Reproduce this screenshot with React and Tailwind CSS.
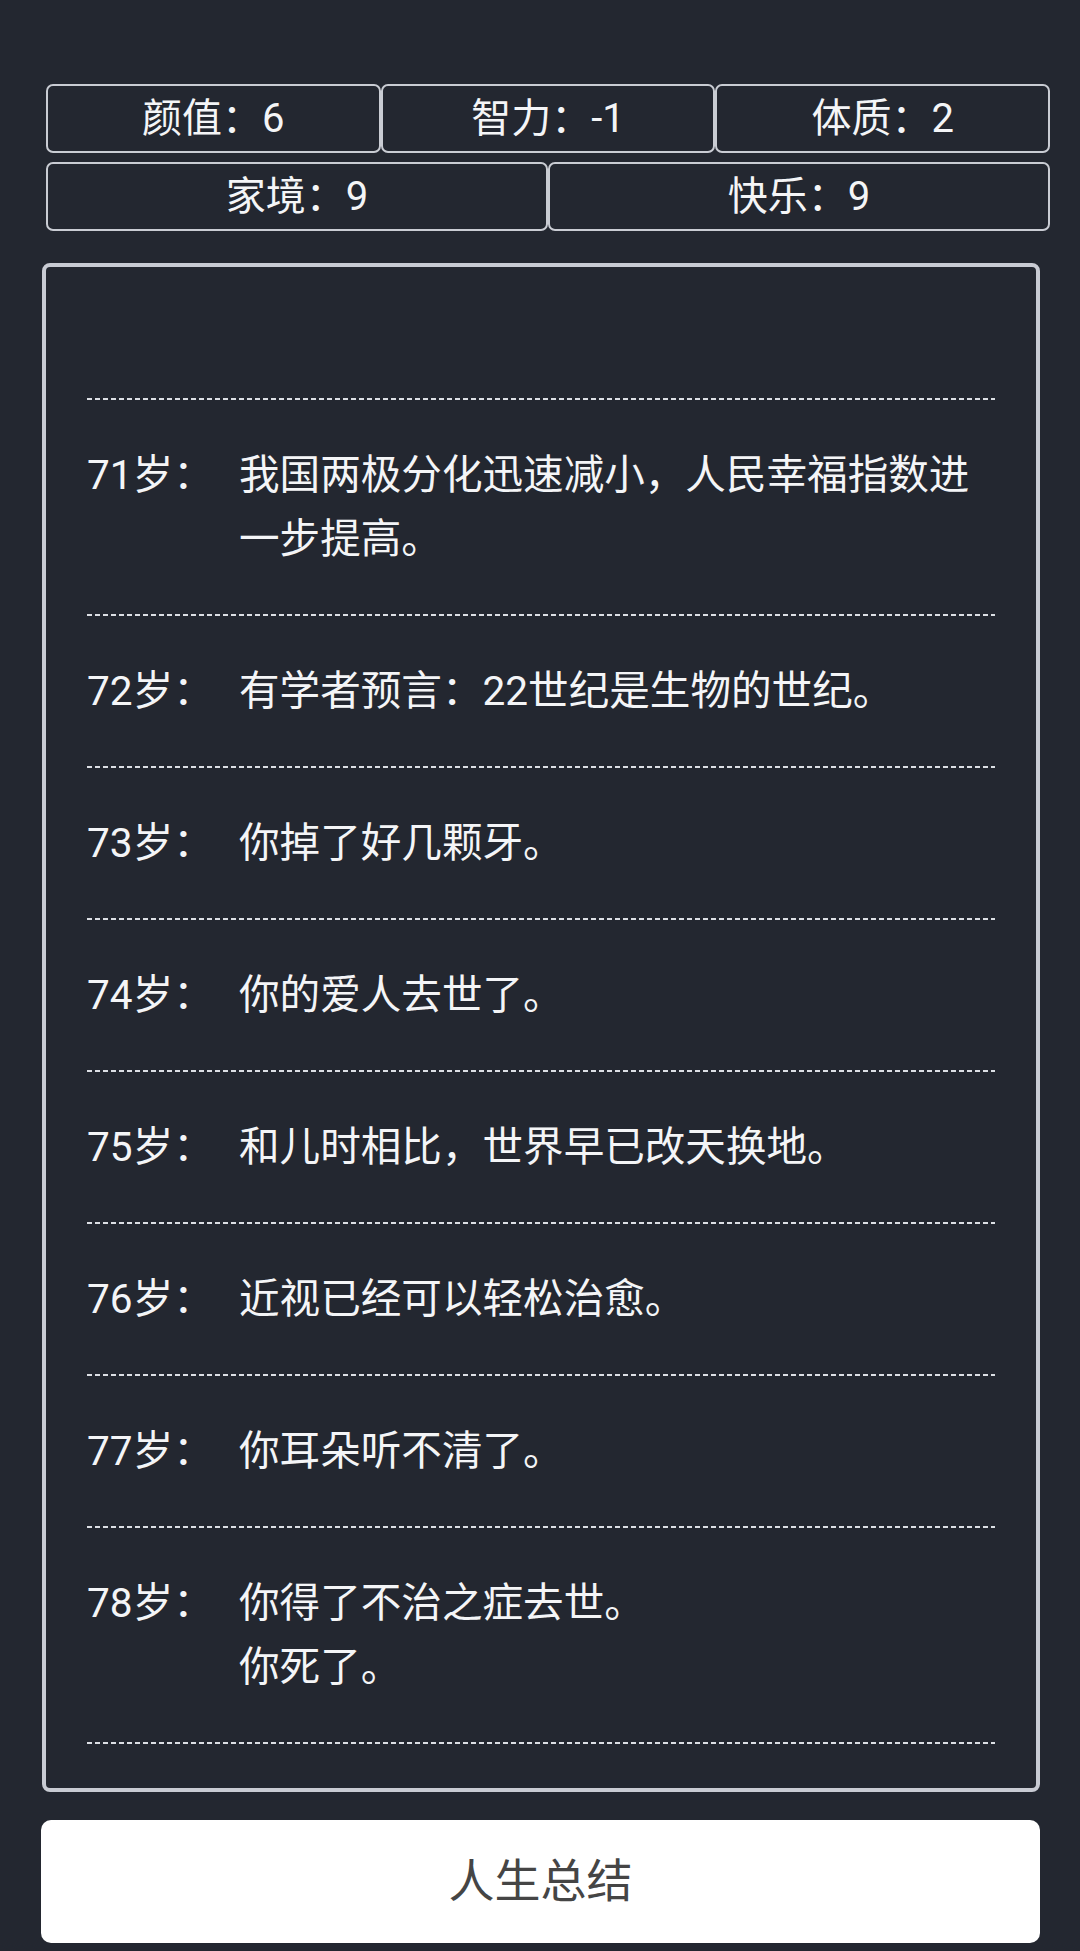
import React from 'react';

const stats = [
  [
    { label: '颜值', value: 6 },
    { label: '智力', value: -1 },
    { label: '体质', value: 2 },
  ],
  [
    { label: '家境', value: 9 },
    { label: '快乐', value: 9 },
  ],
];

const events = [
  { age: 71, lines: ['我国两极分化迅速减小，人民幸福指数进一步提高。'] },
  { age: 72, lines: ['有学者预言：22世纪是生物的世纪。'] },
  { age: 73, lines: ['你掉了好几颗牙。'] },
  { age: 74, lines: ['你的爱人去世了。'] },
  { age: 75, lines: ['和儿时相比，世界早已改天换地。'] },
  { age: 76, lines: ['近视已经可以轻松治愈。'] },
  { age: 77, lines: ['你耳朵听不清了。'] },
  { age: 78, lines: ['你得了不治之症去世。', '你死了。'] },
];

function Dashed() {
  return <div className="h-[2px] w-full bg-[repeating-linear-gradient(90deg,#dcdfe4_0_5px,transparent_5px_8px)]" />;
}

export default function App() {
  return (
    <div className="min-h-[1951px] w-full bg-[#232730] pt-[84px] pb-[8px] font-['Roboto','Noto_Sans_CJK_SC',sans-serif] text-[#f4f5f7]">
      {/* attribute boxes */}
      <div className="ml-[46px] mr-[30px] flex flex-col gap-[9px]">
        {stats.map((row, i) => (
          <div key={i} className="flex">
            {row.map(s => (
              <div
                key={s.label}
                className="flex h-[69px] flex-1 items-center justify-center rounded-[7px] border-2 border-[#c9ccd3] text-[40px] leading-none"
              >
                {s.label}：{s.value}
              </div>
            ))}
          </div>
        ))}
      </div>

      {/* life log */}
      <div className="ml-[42px] mr-[40px] mt-[32px] h-[1529px] overflow-hidden rounded-[8px] border-[4px] border-[#c8cbd3] px-[41px] pt-[131px]">
        {events.map(e => (
          <div key={e.age}>
            <Dashed />
            <div className="flex py-[43px] text-[40.6px] leading-[64px]">
              <div className="w-[152px] shrink-0">{e.age}岁：</div>
              <div className="flex-1">
                {e.lines.map((l, i) => (
                  <div key={i}>{l}</div>
                ))}
              </div>
            </div>
          </div>
        ))}
        <Dashed />
      </div>

      <div className="ml-[41px] mr-[40px] mt-[28px] flex h-[123px] items-center justify-center rounded-[10px] bg-white text-[46px] text-[#454545]">
        人生总结
      </div>
    </div>
  );
}
